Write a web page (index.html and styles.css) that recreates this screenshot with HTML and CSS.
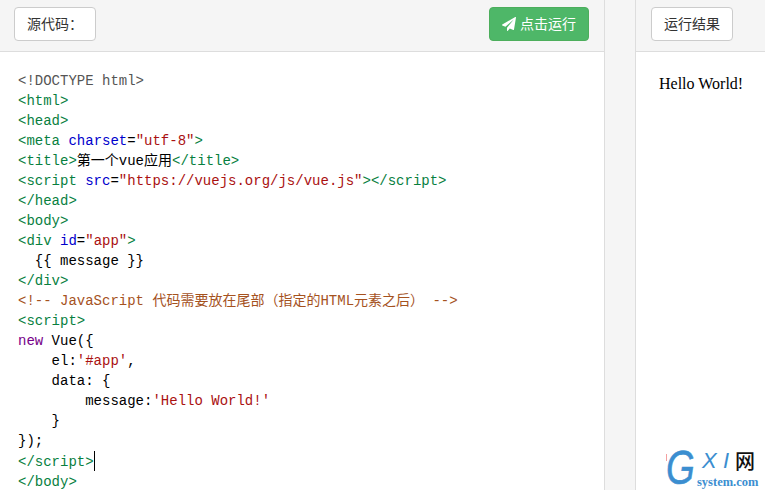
FILE: index.html
```html
<!DOCTYPE html>
<html lang="zh-CN">
<head>
<meta charset="utf-8">
<title>Vue</title>
<link rel="stylesheet" href="styles.css">
</head>
<body>
<div class="layout">
  <section class="pane pane-code">
    <header class="bar bar-between">
      <span class="btn btn-label">源代码：</span>
      <span class="btn btn-run"><svg class="plane" viewBox="0 0 1792 1792" aria-hidden="true"><path d="M1764 11q33 24 27 64l-256 1536q-5 29-32 45-14 8-31 8-11 0-24-5l-453-185-242 295q-18 23-49 23-13 0-22-4-19-7-30.5-23.5t-11.5-36.5v-349l864-1059-1069 925-395-162q-37-14-40-55-2-40 32-59l1664-960q15-9 32-9 20 0 36 11z"/></svg>点击运行</span>
    </header>
    <pre class="code"><span class="m">&lt;!DOCTYPE html&gt;</span>
<span class="t">&lt;html&gt;</span>
<span class="t">&lt;head&gt;</span>
<span class="t">&lt;meta</span> <span class="a">charset</span>=<span class="s">"utf-8"</span><span class="t">&gt;</span>
<span class="t">&lt;title&gt;</span>第一个vue应用<span class="t">&lt;/title&gt;</span>
<span class="t">&lt;script</span> <span class="a">src</span>=<span class="s">"https://vuejs.org/js/vue.js"</span><span class="t">&gt;&lt;/script&gt;</span>
<span class="t">&lt;/head&gt;</span>
<span class="t">&lt;body&gt;</span>
<span class="t">&lt;div</span> <span class="a">id</span>=<span class="s">"app"</span><span class="t">&gt;</span>
  {{ message }}
<span class="t">&lt;/div&gt;</span>
<span class="c">&lt;!-- JavaScript 代码需要放在尾部（指定的HTML元素之后） --&gt;</span>
<span class="t">&lt;script&gt;</span>
<span class="k">new</span> Vue({
    el:<span class="s">'#app'</span>,
    data: {
        message:<span class="s">'Hello World!'</span>
    }
});
<span class="t">&lt;/script&gt;</span><span class="caret"></span>
<span class="t">&lt;/body&gt;</span></pre>
  </section>
  <div class="divider"></div>
  <section class="pane pane-result">
    <header class="bar">
      <span class="btn btn-label">运行结果</span>
    </header>
    <div class="output">Hello World!</div>
  </section>
  <div class="logo">
    <span class="logo-tick"></span>
    <span class="logo-g">G</span>
    <span class="logo-x">X</span>
    <span class="logo-i">I</span>
    <span class="logo-cn">网</span>
    <span class="logo-site">system.com</span>
  </div>
</div>
</body>
</html>
```

FILE: styles.css
```css
html, body {
  margin: 0;
  height: 100%;
  overflow: hidden;
  background: #fff;
}
.layout {
  position: relative;
  display: flex;
  width: 765px;
  height: 490px;
  overflow: hidden;
}
.pane {
  display: flex;
  flex-direction: column;
  background: #fff;
  overflow: hidden;
}
.pane-code {
  width: 604px;
  flex: none;
}
.divider {
  width: 30px;
  flex: none;
  background: #f5f5f5;
  border-left: 1px solid #ddd;
  border-right: 1px solid #ddd;
}
.pane-result {
  flex: 1;
}
.bar {
  height: 44px;
  flex: none;
  display: flex;
  align-items: flex-start;
  background: #f5f5f5;
  border-bottom: 1px solid #ddd;
  padding: 7px 15px 0;
}
.bar-between {
  justify-content: space-between;
  padding: 7px 15px 0 14px;
}
.btn {
  display: inline-flex;
  align-items: center;
  box-sizing: border-box;
  height: 34px;
  padding: 0 12px;
  border: 1px solid #ccc;
  border-radius: 4px;
  background: #fff;
  color: #333;
  font: 14px/20px "Liberation Sans", "Noto Sans CJK SC", sans-serif;
  white-space: nowrap;
}
.btn-run {
  background: #4eb768;
  border-color: #4cae5c;
  color: #fff;
}
.plane {
  width: 14px;
  height: 14px;
  margin-right: 4px;
  fill: #fff;
}
.code {
  margin: 0;
  padding: 19px 0 0 18px;
  font: 14px/20px "Liberation Mono", "Noto Sans CJK SC", monospace;
  color: #000;
  white-space: pre;
}
.m { color: #555; }
.t { color: #087f3f; }
.a { color: #00c; }
.s { color: #a11; }
.k { color: #708; }
.c { color: #a5521e; }
.caret {
  display: inline-block;
  width: 1px;
  height: 20px;
  margin-bottom: -5px;
  background: #000;
}
.output {
  padding: 22px 0 0 23px;
  font: 16px/20px "Liberation Serif", serif;
  color: #000;
}
.logo {
  position: absolute;
  left: 660px;
  top: 445px;
  width: 105px;
  height: 45px;
  color: #3b8ed0;
}
.logo span {
  position: absolute;
  white-space: nowrap;
}
.logo-tick {
  left: 6px;
  top: 9px;
  width: 1px;
  height: 7px;
  background: #f4a0a0;
}
.logo-g {
  left: 6px;
  top: 0;
  font: italic 48px/45px "Liberation Sans", sans-serif;
  -webkit-text-stroke: .6px #3b8ed0;
  transform: scaleX(.77);
  transform-origin: left top;
}
.logo-x {
  left: 42px;
  top: 4px;
  font: italic 22px/24px "Liberation Sans", sans-serif;
}
.logo-i {
  left: 63px;
  top: 4px;
  font: italic 22px/24px "Liberation Sans", sans-serif;
}
.logo-cn {
  left: 75px;
  top: 3px;
  font: 500 20px/26px "Noto Sans CJK SC", sans-serif;
  color: #111;
}
.logo-site {
  left: 37px;
  top: 30px;
  font: bold 12.5px/14px "Liberation Serif", serif;
}
```
